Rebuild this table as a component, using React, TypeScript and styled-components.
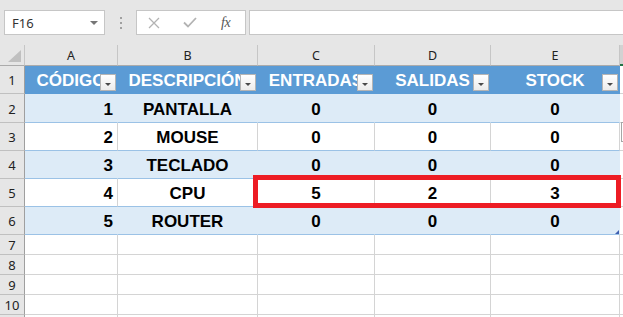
import React from 'react';
import styled, { createGlobalStyle, css } from 'styled-components';

const GlobalStyle = createGlobalStyle`
  html, body {
    margin: 0;
    padding: 0;
    background: #ffffff;
    overflow: hidden;
  }
  #root {
    width: 623px;
    height: 317px;
    overflow: hidden;
  }
`;

const Page = styled.div`
  width: 623px;
  height: 317px;
  overflow: hidden;
  font-family: 'Liberation Sans', Arial, sans-serif;
`;

/* ---------- formula bar ---------- */

const FormulaBar = styled.div`
  display: flex;
  align-items: flex-start;
  height: 45px;
  padding-top: 10px;
  box-sizing: border-box;
  background: #e6e6e6;
`;

const NameBox = styled.div`
  display: flex;
  align-items: center;
  justify-content: space-between;
  width: 101px;
  height: 25px;
  margin-left: 4px;
  padding: 0 6px 0 7px;
  box-sizing: border-box;
  background: #ffffff;
  border: 1px solid #c6c6c6;
  font-family: 'Noto Sans', 'Open Sans', sans-serif;
  font-size: 13px;
  color: #333333;
`;

const Caret = styled.span`
  width: 0;
  height: 0;
  border-left: 4px solid transparent;
  border-right: 4px solid transparent;
  border-top: 4px solid #767676;
`;

const Grip = styled.div`
  display: flex;
  flex-direction: column;
  align-items: center;
  justify-content: center;
  gap: 3px;
  width: 31px;
  height: 25px;

  span {
    width: 2px;
    height: 2px;
    background: #a0a0a0;
  }
`;

const FxButtons = styled.div`
  display: flex;
  align-items: center;
  width: 110px;
  height: 25px;
  box-sizing: border-box;
  background: #ffffff;
  border: 1px solid #c6c6c6;
  padding-left: 11px;
  gap: 23px;
`;

const FxLabel = styled.span`
  font-family: 'Liberation Serif', 'Times New Roman', serif;
  font-style: italic;
  font-size: 14px;
  color: #555555;
  letter-spacing: -0.5px;
  margin-left: 1px;
`;

const FormulaInput = styled.div`
  flex: 1;
  height: 25px;
  margin-left: 3px;
  box-sizing: border-box;
  background: #ffffff;
  border: 1px solid #c6c6c6;
  border-right: none;
`;

/* ---------- sheet grid ---------- */

const Sheet = styled.div`
  position: relative;
  display: grid;
  grid-template-columns: 25px 93px 140px 117px 116px 129px 1fr;
  grid-template-rows: 21px 28px 29px 28px 28px 28px 28px 20px 20px 20px 20px 20px;
  background: #ffffff;
`;

const Corner = styled.div`
  position: relative;
  background: #e6e6e6;
  border-right: 1px solid #c6c6c6;
  border-bottom: 1px solid #ababab;

  &::after {
    content: '';
    position: absolute;
    right: 3px;
    bottom: 3px;
    width: 0;
    height: 0;
    border-left: 13px solid transparent;
    border-bottom: 12px solid #c0c0c0;
  }
`;

const ColHead = styled.div<{ $active?: boolean }>`
  display: flex;
  align-items: center;
  justify-content: center;
  box-sizing: border-box;
  background: #e6e6e6;
  border-right: 1px solid #c6c6c6;
  border-bottom: 1px solid #ababab;
  font-family: 'Noto Sans', 'Open Sans', sans-serif;
  font-size: 12.5px;
  color: #222222;

  ${({ $active }) =>
    $active &&
    css`
      background: #d2d2d2;
      border-bottom: 2px solid #217346;
    `}
`;

const RowHead = styled.div`
  display: flex;
  align-items: center;
  justify-content: center;
  box-sizing: border-box;
  padding-top: 1px;
  background: #e6e6e6;
  border-right: 1px solid #9f9f9f;
  border-bottom: 1px solid #c0c0c0;
  font-family: 'Noto Sans', 'Open Sans', sans-serif;
  font-size: 13px;
  color: #222222;
`;

type Tone = 'head' | 'band' | 'plain' | 'empty';

const toneStyles: Record<Tone, ReturnType<typeof css>> = {
  head: css`
    background: #5b9bd5;
    color: #ffffff;
    border-right: 1px solid #5b9bd5;
    border-bottom: 1px solid #5b9bd5;
  `,
  band: css`
    background: #ddebf7;
    border-right: 1px solid #ddebf7;
    border-bottom: 1px solid #9bc2e6;
  `,
  plain: css`
    background: #ffffff;
    border-right: 1px solid #d4d4d4;
    border-bottom: 1px solid #9bc2e6;
  `,
  empty: css`
    background: #ffffff;
    border-right: 1px solid #d4d4d4;
    border-bottom: 1px solid #d4d4d4;
  `,
};

const Cell = styled.div<{ $tone: Tone; $align?: 'right' | 'center' }>`
  position: relative;
  display: flex;
  align-items: flex-end;
  justify-content: ${({ $align }) => ($align === 'right' ? 'flex-end' : 'center')};
  box-sizing: border-box;
  padding: 0 4px 2px 4px;
  overflow: hidden;
  white-space: nowrap;
  font-size: 17px;
  line-height: 20px;
  font-weight: 700;
  color: #000000;
  ${({ $tone }) => toneStyles[$tone]}
`;

const FilterButton = styled.span`
  position: absolute;
  right: 1px;
  bottom: 2px;
  width: 16px;
  height: 17px;
  box-sizing: border-box;
  background: linear-gradient(#ffffff, #ececec);
  border: 1px solid #b5b5b5;

  &::after {
    content: '';
    position: absolute;
    left: 4px;
    top: 8px;
    width: 0;
    height: 0;
    border-left: 3px solid transparent;
    border-right: 3px solid transparent;
    border-top: 3px solid #4a4a4a;
  }
`;

const ResizeHandle = styled.span`
  position: absolute;
  right: 0;
  bottom: 0;
  width: 0;
  height: 0;
  border-left: 4px solid transparent;
  border-bottom: 4px solid #3f5fb0;
`;

const Highlight = styled.div`
  position: absolute;
  left: 253px;
  top: 130px;
  width: 368px;
  height: 33px;
  box-sizing: border-box;
  border: 5px solid #ed1c24;
  pointer-events: none;
`;

const SideTab = styled.div`
  position: absolute;
  left: 621px;
  top: 77px;
  width: 8px;
  height: 20px;
  box-sizing: border-box;
  background: #ffffff;
  border: 1px solid #a6a6a6;
`;

const columns = ['A', 'B', 'C', 'D', 'E'];
const headers = ['CÓDIGO', 'DESCRIPCIÓN', 'ENTRADAS', 'SALIDAS', 'STOCK'];

const products = [
  { code: 1, name: 'PANTALLA', inbound: 0, outbound: 0, stock: 0 },
  { code: 2, name: 'MOUSE', inbound: 0, outbound: 0, stock: 0 },
  { code: 3, name: 'TECLADO', inbound: 0, outbound: 0, stock: 0 },
  { code: 4, name: 'CPU', inbound: 5, outbound: 2, stock: 3 },
  { code: 5, name: 'ROUTER', inbound: 0, outbound: 0, stock: 0 },
];

// last row only peeks in at the bottom edge, so its number stays hidden
const emptyRows = [7, 8, 9, 10, 0];

const CloseIcon = () => (
  <svg width="12" height="12" viewBox="0 0 12 12">
    <path d="M1 1 L11 11 M11 1 L1 11" stroke="#b3b3b3" strokeWidth="1.3" fill="none" />
  </svg>
);

const CheckIcon = () => (
  <svg width="14" height="11" viewBox="0 0 14 11">
    <path d="M1 5.5 L5 9.5 L13 1" stroke="#b3b3b3" strokeWidth="1.8" fill="none" />
  </svg>
);

export default function App() {
  return (
    <Page>
      <GlobalStyle />
      <FormulaBar>
        <NameBox>
          F16
          <Caret />
        </NameBox>
        <Grip>
          <span />
          <span />
          <span />
        </Grip>
        <FxButtons>
          <CloseIcon />
          <CheckIcon />
          <FxLabel>fx</FxLabel>
        </FxButtons>
        <FormulaInput />
      </FormulaBar>

      <Sheet>
        <Corner />
        {columns.map((c) => (
          <ColHead key={c}>{c}</ColHead>
        ))}
        <ColHead $active />

        <RowHead>1</RowHead>
        {headers.map((h) => (
          <Cell key={h} $tone="head">
            {h}
            <FilterButton />
          </Cell>
        ))}
        <Cell $tone="empty" />

        {products.map((p, i) => {
          const tone: Tone = i % 2 === 0 ? 'band' : 'plain';
          const last = i === products.length - 1;
          return (
            <React.Fragment key={p.code}>
              <RowHead>{i + 2}</RowHead>
              <Cell $tone={tone} $align="right">{p.code}</Cell>
              <Cell $tone={tone}>{p.name}</Cell>
              <Cell $tone={tone}>{p.inbound}</Cell>
              <Cell $tone={tone}>{p.outbound}</Cell>
              <Cell $tone={tone}>
                {p.stock}
                {last && <ResizeHandle />}
              </Cell>
              <Cell $tone="empty" />
            </React.Fragment>
          );
        })}

        {emptyRows.map((r, i) => (
          <React.Fragment key={i}>
            <RowHead>{r || ''}</RowHead>
            {columns.map((c) => (
              <Cell key={c} $tone="empty" />
            ))}
            <Cell $tone="empty" />
          </React.Fragment>
        ))}

        <Highlight />
        <SideTab />
      </Sheet>
    </Page>
  );
}
